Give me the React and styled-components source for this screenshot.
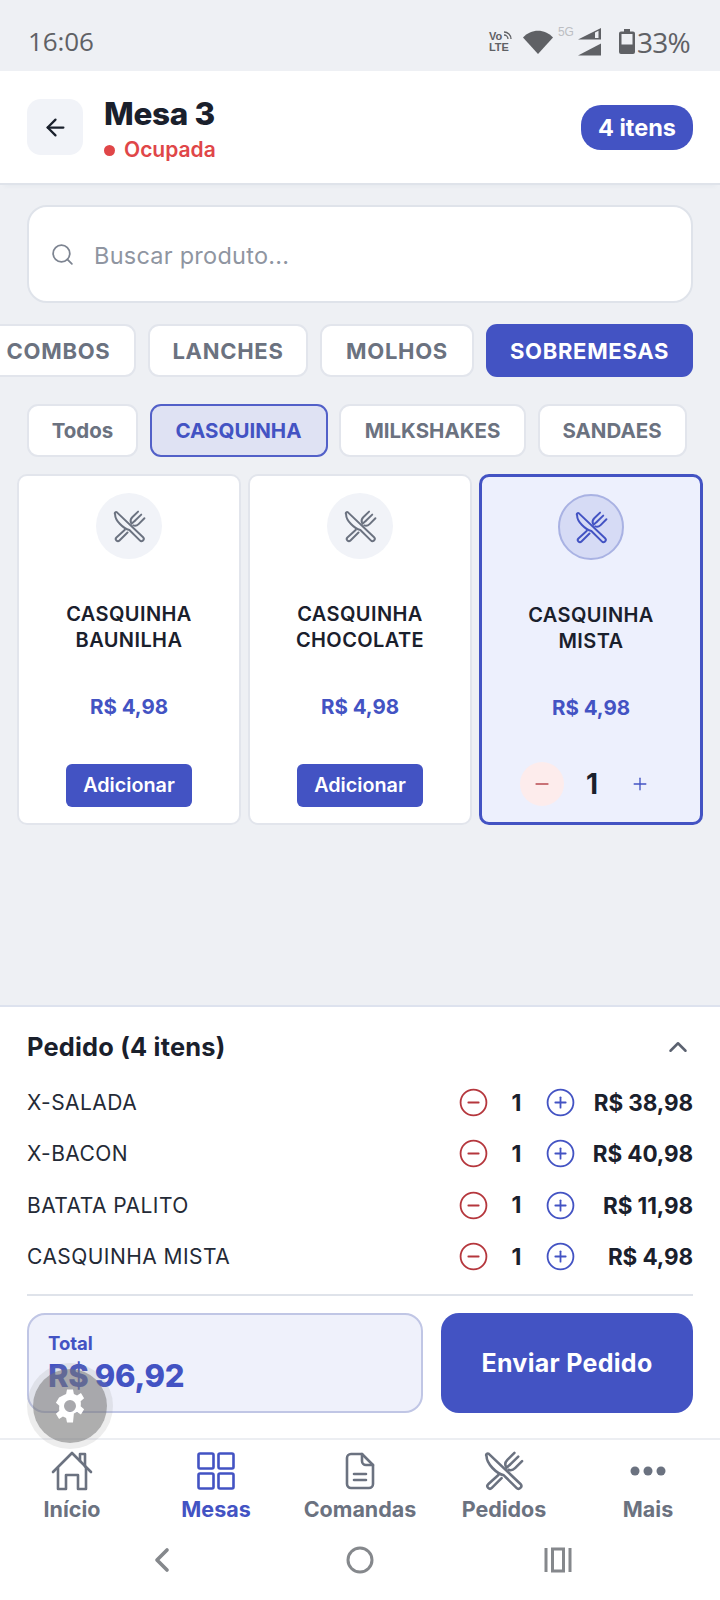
import React from 'react';
import styled, { createGlobalStyle } from 'styled-components';
import { ArrowLeft, Search, ChevronUp, Minus, Plus, CirclePlus, CircleMinus, ChevronLeft } from 'lucide-react';

const FONT = '"Inter", "Liberation Sans", sans-serif';
const BLUE = '#4353c3';
const GREY = '#6b7280';
const INK = '#1a202c';

const Global = createGlobalStyle`
  html, body { margin: 0; padding: 0; }
  body { font-family: ${FONT}; background: #eef0f4; }
  * { box-sizing: border-box; }
`;

const Screen = styled.div`
  position: relative;
  width: 720px;
  height: 1600px;
  display: flex;
  flex-direction: column;
  overflow: hidden;
  background: #eef0f4;
`;

const StatusBar = styled.div`
  height: 71px;
  flex: none;
  display: flex;
  align-items: center;
  justify-content: space-between;
  padding: 12px 30px 0 28px;
  color: #5f6165;
`;
const Clock = styled.span`
  font: 400 26px "Open Sans", sans-serif;
  letter-spacing: -0.1px;
  margin-top: -2px;
`;
const StatusIcons = styled.div`
  display: flex;
  align-items: center;
`;
const VoLte = styled.span`
  font: 700 11px/11px "Liberation Sans", sans-serif;
  width: 34px;
  color: #5f6165;
`;
const FiveG = styled.span`
  font: 400 12px/12px "Liberation Sans", sans-serif;
  color: #bcbec2;
  align-self: flex-start;
  margin: 3px 0 0 5px;
  width: 20px;
`;
const Percent = styled.span`
  font: 400 28px "Open Sans", sans-serif;
  letter-spacing: -0.7px;
  margin-left: 2px;
`;

const Header = styled.header`
  height: 114px;
  flex: none;
  background: #fff;
  border-bottom: 2px solid #dfe3ea;
  padding: 0 27px;
  display: flex;
  align-items: center;
  gap: 21px;
  box-shadow: 0 6px 4px -4px rgba(40, 50, 80, 0.03);
`;
const BackButton = styled.div`
  width: 56px;
  height: 56px;
  border-radius: 14px;
  background: #f1f3f8;
  display: flex;
  align-items: center;
  justify-content: center;
  color: ${INK};
`;
const TitleBlock = styled.div`
  flex: 1;
  display: flex;
  flex-direction: column;
  gap: 6px;
  margin-top: 4px;
`;
const Title = styled.h1`
  margin: 0;
  font: 800 31.5px/36px ${FONT};
  color: ${INK};
  letter-spacing: -0.3px;
`;
const Status = styled.div`
  display: flex;
  align-items: center;
  gap: 9px;
  font: 600 21px/24px ${FONT};
  color: #e04648;
  &::before {
    content: '';
    width: 11px;
    height: 11px;
    border-radius: 50%;
    background: #e04648;
  }
`;
const Pill = styled.div`
  width: 112px;
  height: 45px;
  margin-top: 1px;
  border-radius: 20px;
  background: ${BLUE};
  color: #fff;
  font: 700 23.5px/45px ${FONT};
  text-align: center;
`;

const Content = styled.main`
  flex: 1;
  min-height: 0;
  display: flex;
  flex-direction: column;
`;
const SearchBox = styled.div`
  height: 98px;
  margin: 20px 27px 0;
  background: #fff;
  border: 2px solid #dfe3ea;
  border-radius: 20px;
  display: flex;
  align-items: center;
  gap: 19px;
  padding: 0 21px;
  color: #7d8491;
  font: 400 23.5px ${FONT};
`;
const Placeholder = styled.span`
  color: #8f95a1;
  letter-spacing: 0.25px;
  margin-top: 2px;
`;
const CategoryRow = styled.div`
  display: flex;
  justify-content: ${p => (p.$end ? 'flex-end' : 'flex-start')};
  gap: ${p => (p.$end ? 12 : 11.5)}px;
  margin: ${p => p.$margin};
  padding: 0 27px;
  overflow: hidden;
  flex: none;
`;
const Chip = styled.div`
  flex: none;
  width: ${p => p.$width}px;
  height: 53px;
  border-radius: 11px;
  display: flex;
  align-items: center;
  justify-content: center;
  font: 700 ${p => (p.$small ? 20.5 : 22)}px ${FONT};
  letter-spacing: ${p => (p.$small ? 0 : 0.7)}px;
  background: ${p => (p.$solid ? BLUE : p.$soft ? '#dfe2f3' : '#fff')};
  color: ${p => (p.$solid ? '#fff' : p.$soft ? BLUE : GREY)};
  border: ${p => (p.$soft ? '2px solid #5260c8' : p.$solid ? 'none' : '2px solid #e2e5ec')};
`;
const Cards = styled.div`
  display: grid;
  grid-template-columns: repeat(3, 1fr);
  gap: 7px;
  padding: 0 17px;
  margin-top: 17px;
`;
const Card = styled.article`
  height: 351px;
  border-radius: 10px;
  background: ${p => (p.$on ? '#edf0fd' : '#fff')};
  border: ${p => (p.$on ? `3px solid ${BLUE}` : '2px solid #e2e5ec')};
  display: flex;
  flex-direction: column;
  align-items: center;
  padding-top: 17px;
`;
const Thumb = styled.div`
  width: 66px;
  height: 66px;
  border-radius: 50%;
  flex: none;
  display: flex;
  align-items: center;
  justify-content: center;
  background: ${p => (p.$on ? '#d6dbf5' : '#f1f3f8')};
  border: ${p => (p.$on ? '2px solid #a9b2e3' : 'none')};
  color: ${p => (p.$on ? BLUE : GREY)};
`;
const CardName = styled.div`
  margin-top: 43px;
  height: 76px;
  font: 600 20px/25.5px ${FONT};
  letter-spacing: 0.4px;
  color: ${INK};
  text-align: center;
`;
const CardPrice = styled.div`
  margin-top: 15px;
  font: 700 20.5px/28px ${FONT};
  color: ${BLUE};
`;
const CardAction = styled.div`
  margin-top: auto;
  margin-bottom: 16px;
  display: flex;
  align-items: center;
  justify-content: center;
`;
const AddButton = styled.div`
  width: 126px;
  height: 43px;
  border-radius: 6px;
  background: ${BLUE};
  color: #fff;
  font: 600 19.8px/43px ${FONT};
  text-align: center;
`;
const RoundMinus = styled.div`
  width: 44px;
  height: 44px;
  border-radius: 50%;
  background: #fdecec;
  color: #b84a50;
  display: flex;
  align-items: center;
  justify-content: center;
`;
const CardQty = styled.span`
  width: 56px;
  text-align: center;
  font: 700 28px ${FONT};
  color: ${INK};
`;
const CardPlus = styled.div`
  width: 44px;
  display: flex;
  justify-content: center;
  color: ${BLUE};
  margin-left: -2px;
`;

const Panel = styled.section`
  flex: none;
  height: 433px;
  background: #fff;
  border-top: 2px solid #dde2ee;
  padding: 0 27px;
  display: flex;
  flex-direction: column;
`;
const PanelHead = styled.div`
  height: 70px;
  padding: 9px 0 0;
  display: flex;
  align-items: center;
  justify-content: space-between;
  flex: none;
  color: #5b6270;
`;
const PanelTitle = styled.h2`
  margin: 0;
  font: 700 25.4px ${FONT};
  letter-spacing: 0.2px;
  color: ${INK};
`;
const OrderRow = styled.div`
  height: 51.3px;
  flex: none;
  display: flex;
  align-items: center;
`;
const ItemName = styled.span`
  flex: 1;
  font: 400 21px ${FONT};
  letter-spacing: 0.45px;
  color: #242a36;
`;
const IconCell = styled.span`
  display: flex;
  color: ${p => p.$color};
`;
const RowQty = styled.span`
  width: 56px;
  text-align: center;
  font: 700 23px ${FONT};
  color: ${INK};
`;
const RowPrice = styled.span`
  width: 117.5px;
  text-align: right;
  font: 700 22.5px ${FONT};
  letter-spacing: -0.1px;
  color: ${INK};
`;
const Divider = styled.hr`
  margin: 12px 0 17px;
  border: none;
  height: 2px;
  background: #dfe3ea;
  flex: none;
`;
const TotalRow = styled.div`
  display: flex;
  gap: 18px;
  height: 100px;
  flex: none;
`;
const TotalBox = styled.div`
  width: 396px;
  border-radius: 18px;
  background: #eff1fb;
  border: 2px solid #c0c6e5;
  padding: 16px 19px 0;
  color: ${BLUE};
`;
const TotalLabel = styled.div`
  font: 700 18.5px/24px ${FONT};
`;
const TotalValue = styled.div`
  font: 800 31px/38px ${FONT};
  letter-spacing: -0.3px;
  margin-top: 2px;
`;
const SendButton = styled.div`
  flex: 1;
  border-radius: 18px;
  background: ${BLUE};
  color: #fff;
  display: flex;
  align-items: center;
  justify-content: center;
  font: 700 25px ${FONT};
  letter-spacing: 0.3px;
`;

const Nav = styled.nav`
  flex: none;
  height: 92px;
  background: #fff;
  border-top: 2px solid #eceef2;
  display: grid;
  grid-template-columns: repeat(5, 1fr);
`;
const NavItem = styled.div`
  display: flex;
  flex-direction: column;
  align-items: center;
  padding-top: 9px;
  color: ${p => (p.$on ? BLUE : GREY)};
  font: 700 21.5px/26px ${FONT};
`;
const NavIcon = styled.div`
  width: 44px;
  height: 44px;
  margin-bottom: 3px;
  display: flex;
  align-items: center;
  justify-content: center;
`;
const SystemBar = styled.div`
  flex: none;
  height: 70px;
  background: #fff;
  display: grid;
  grid-template-columns: repeat(3, 198px);
  justify-content: center;
  justify-items: center;
  padding-bottom: 10px;
  align-items: center;
  color: #85888c;
`;
const GearBubble = styled.div`
  position: absolute;
  left: 33px;
  top: 1369px;
  width: 74px;
  height: 74px;
  border-radius: 50%;
  background: rgba(120, 120, 120, 0.6);
  box-shadow: 0 0 0 6px rgba(140, 140, 140, 0.16);
  display: flex;
  align-items: center;
  justify-content: center;
`;

const Wifi = () => (
  <svg width="30" height="24" viewBox="0 0 30 24"><path d="M0 7.500C8 -1.500 22 -1.500 30 7.500L15 24Z" fill="#5f6165" /></svg>
);
const Signal = () => (
  <svg width="23" height="28" viewBox="0 0 23 28">
    <path d="M0 11.500 23 0V11.500Z M17 4.500V10H20.500V2.800Z" fill="#5f6165" fillRule="evenodd" />
    <path d="M0 27.500 23 15.500V27.500Z" fill="#5f6165" />
  </svg>
);
const Battery = () => (
  <svg width="16" height="25" viewBox="0 0 16 25" style={{ marginLeft: 18 }}>
    <path d="M5 0h6v2.500h3a2 2 0 0 1 2 2V23a2 2 0 0 1-2 2H2a2 2 0 0 1-2-2V4.500a2 2 0 0 1 2-2h3Z M2.500 5v10.500h11V5Z" fill="#5f6165" fillRule="evenodd" />
  </svg>
);
const WaveMini = () => (
  <svg width="9" height="9" viewBox="0 0 9 9" style={{ marginLeft: 1 }}>
    <path d="M1 1a7 7 0 0 1 7 7M1 4a4 4 0 0 1 4 4" fill="none" stroke="#5f6165" strokeWidth="1.3" />
  </svg>
);
const Cutlery = ({ size, stroke }) => (
  <svg width={size} height={size} viewBox="0 0 25 25" fill="none" stroke="currentColor" strokeWidth={stroke} strokeLinecap="round" strokeLinejoin="round">
    <path d="M3 1.800 22.800 20.600a1.700 1.700 0 0 1-2.500 2.400L12.400 15.200C8 14.200 1.500 8 1.600 3.200A1 1 0 0 1 3 1.800Z" />
    <path d="M9 15 2.600 20.800a1.600 1.600 0 0 0 2.300 2.300L11 17" />
    <path d="M14 10.500 16.200 8.600" />
    <path d="M13.600 9.600c-.6-1.400-.1-3 1-4.100L19 1.200M15.300 11.700c1.400.6 3 .1 4.100-1L23.800 6.300M16.600 8.200 21.400 3.500" />
  </svg>
);
const Home = () => (
  <svg width="42" height="40" viewBox="0 0 42 40" fill="none" stroke="currentColor" strokeWidth="2.600" strokeLinejoin="round" strokeLinecap="round">
    <path d="M2 21 21 2l19 19" />
    <path d="M29 10V3h5v12.500" />
    <path d="M7 17v21h8V24h12v14h8V17" />
  </svg>
);
const Squares = () => (
  <svg width="38" height="38" viewBox="0 0 38 38" fill="none" stroke="currentColor" strokeWidth="2.600">
    <rect x="1.500" y="1.500" width="15" height="15" rx="1.500" />
    <rect x="21.500" y="1.500" width="15" height="15" rx="1.500" />
    <rect x="1.500" y="21.500" width="15" height="15" rx="1.500" />
    <rect x="21.500" y="21.500" width="15" height="15" rx="1.500" />
  </svg>
);
const Doc = () => (
  <svg width="30" height="38" viewBox="0 0 30 38" fill="none" stroke="currentColor" strokeWidth="2.600" strokeLinecap="round" strokeLinejoin="round">
    <path d="M6 2h11l11 11v19a4 4 0 0 1-4 4H6a4 4 0 0 1-4-4V6a4 4 0 0 1 4-4Z" />
    <path d="M17 2v7a4 4 0 0 0 4 4h7" />
    <path d="M9 22h12M9 28h12" />
  </svg>
);
const Dots = () => (
  <svg width="36" height="10" viewBox="0 0 36 10" fill="currentColor">
    <circle cx="5" cy="5" r="4.500" /><circle cx="18" cy="5" r="4.500" /><circle cx="31" cy="5" r="4.500" />
  </svg>
);
const Gear = () => (
  <svg width="36" height="38" viewBox="0 0 24 24">
    <path fill="#fff" fillRule="evenodd" d="M10 1h4l.6 3 2.100 1 2.600-1.600 2.100 3.400-2.300 2c.2.800.2 2.600 0 3.400l2.300 2-2.100 3.400-2.600-1.600-2.100 1L14 23h-4l-.6-3-2.100-1-2.600 1.600-2.100-3.400 2.300-2c-.2-.8-.2-2.600 0-3.400l-2.300-2 2.100-3.400L7.300 5l2.100-1ZM12 8a4 4 0 1 0 0 8 4 4 0 0 0 0-8Z" />
  </svg>
);
const Recents = () => (
  <svg width="28" height="26" viewBox="0 0 28 26" fill="none" stroke="currentColor" strokeWidth="3">
    <path d="M2 1v24M26 1v24" /><rect x="8.500" y="2" width="11" height="22" />
  </svg>
);

const products = [
  { name: ['CASQUINHA', 'BAUNILHA'], price: 'R$ 4,98' },
  { name: ['CASQUINHA', 'CHOCOLATE'], price: 'R$ 4,98' },
  { name: ['CASQUINHA', 'MISTA'], price: 'R$ 4,98', qty: 1 },
];
const orders = [
  ['X-SALADA', 'R$ 38,98'],
  ['X-BACON', 'R$ 40,98'],
  ['BATATA PALITO', 'R$ 11,98'],
  ['CASQUINHA MISTA', 'R$ 4,98'],
];
const navItems = [
  ['Início', <Home />],
  ['Mesas', <Squares />, true],
  ['Comandas', <Doc />],
  ['Pedidos', <Cutlery size={40} stroke={1.600} />],
  ['Mais', <Dots />],
];

export default function App() {
  return (
    <Screen>
      <Global />
      <StatusBar>
        <Clock>16:06</Clock>
        <StatusIcons>
          <VoLte>Vo<WaveMini /><br />LTE</VoLte>
          <Wifi />
          <FiveG>5G</FiveG>
          <Signal />
          <Battery />
          <Percent>33%</Percent>
        </StatusIcons>
      </StatusBar>
      <Header>
        <BackButton><ArrowLeft size={27} strokeWidth={2} /></BackButton>
        <TitleBlock>
          <Title>Mesa 3</Title>
          <Status>Ocupada</Status>
        </TitleBlock>
        <Pill>4 itens</Pill>
      </Header>
      <Content>
        <SearchBox>
          <Search size={25} strokeWidth={1.700} />
          <Placeholder>Buscar produto...</Placeholder>
        </SearchBox>
        <CategoryRow $end $margin="21px 0 0">
          <Chip $width={155}>COMBOS</Chip>
          <Chip $width={160}>LANCHES</Chip>
          <Chip $width={154}>MOLHOS</Chip>
          <Chip $width={207} $solid>SOBREMESAS</Chip>
        </CategoryRow>
        <CategoryRow $margin="27px 0 0">
          <Chip $small $width={111}>Todos</Chip>
          <Chip $small $width={178} $soft>CASQUINHA</Chip>
          <Chip $small $width={187}>MILKSHAKES</Chip>
          <Chip $small $width={149}>SANDAES</Chip>
        </CategoryRow>
        <Cards>
          {products.map(p => (
            <Card key={p.name[1]} $on={!!p.qty}>
              <Thumb $on={!!p.qty}><Cutlery size={33} stroke={1.500} /></Thumb>
              <CardName>{p.name[0]}<br />{p.name[1]}</CardName>
              <CardPrice>{p.price}</CardPrice>
              <CardAction>
                {p.qty ? (
                  <>
                    <RoundMinus><Minus size={20} strokeWidth={2} /></RoundMinus>
                    <CardQty>{p.qty}</CardQty>
                    <CardPlus><Plus size={20} strokeWidth={1.600} /></CardPlus>
                  </>
                ) : (
                  <AddButton>Adicionar</AddButton>
                )}
              </CardAction>
            </Card>
          ))}
        </Cards>
      </Content>
      <Panel>
        <PanelHead>
          <PanelTitle>Pedido (4 itens)</PanelTitle>
          <ChevronUp size={30} strokeWidth={2} />
        </PanelHead>
        {orders.map(([name, price]) => (
          <OrderRow key={name}>
            <ItemName>{name}</ItemName>
            <IconCell $color="#b5373d"><CircleMinus size={31} strokeWidth={1.400} /></IconCell>
            <RowQty>1</RowQty>
            <IconCell $color={BLUE}><CirclePlus size={31} strokeWidth={1.400} /></IconCell>
            <RowPrice>{price}</RowPrice>
          </OrderRow>
        ))}
        <Divider />
        <TotalRow>
          <TotalBox>
            <TotalLabel>Total</TotalLabel>
            <TotalValue>R$ 96,92</TotalValue>
          </TotalBox>
          <SendButton>Enviar Pedido</SendButton>
        </TotalRow>
      </Panel>
      <Nav>
        {navItems.map(([label, icon, on]) => (
          <NavItem key={label} $on={on}>
            <NavIcon>{icon}</NavIcon>
            {label}
          </NavItem>
        ))}
      </Nav>
      <SystemBar>
        <ChevronLeft size={40} strokeWidth={2.200} />
        <svg width="28" height="28" viewBox="0 0 28 28" fill="none" stroke="currentColor" strokeWidth="3"><circle cx="14" cy="14" r="12" /></svg>
        <Recents />
      </SystemBar>
      <GearBubble><Gear /></GearBubble>
    </Screen>
  );
}
